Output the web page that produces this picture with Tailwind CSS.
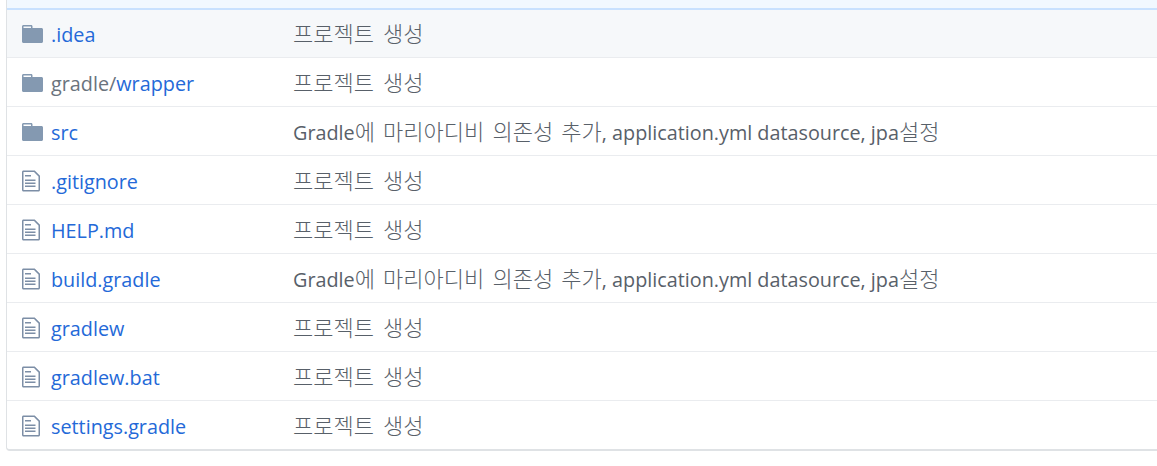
<!DOCTYPE html>
<html lang="ko">
<head>
    <meta charset="UTF-8">
    <title>Repository files</title>
    <script src="https://cdn.jsdelivr.net/npm/@tailwindcss/browser@4"></script>
</head>
<body class="bg-white overflow-hidden font-['Open_Sans','Noto_Sans_CJK_KR',sans-serif] text-[19.8px]">
    <div class="ml-[6px] h-[451px] border-l border-b-2 border-[#dfe2e5] rounded-bl-[4px] overflow-hidden">
        <div class="h-[10px] bg-[#f1f8ff] border-b-2 border-[#c8e1ff]"></div>

        <!-- folders -->
        <div class="h-[48px] pb-[1px] flex items-center bg-[#f6f8fa] border-b border-[#eaecef]">
            <div class="w-[44px] pl-[15px] pt-[1px] shrink-0">
                <svg class="w-[21px] h-[24px] fill-[#8499b1]" viewBox="0 0 14 16"><path fill-rule="evenodd" d="M13 4H7V3c0-.66-.31-1-1-1H1c-.55 0-1 .45-1 1v10c0 .55.45 1 1 1h12c.55 0 1-.45 1-1V5c0-.55-.45-1-1-1zM6 4H1V3h5v1z"/></svg>
            </div>
            <a class="w-[242px] shrink-0 pt-[3px] leading-[30px] text-[#2469d8]">.idea</a>
            <span class="pt-[1px] leading-[30px] text-[#586069]"><span class="text-[22px] [word-spacing:3px] font-['Noto_Sans_CJK_KR'] font-light">프로젝트 생성</span></span>
        </div>
        <div class="h-[49px] flex items-center border-b border-[#eaecef]">
            <div class="w-[44px] pl-[15px] pt-[1px] shrink-0">
                <svg class="w-[21px] h-[24px] fill-[#8499b1]" viewBox="0 0 14 16"><path fill-rule="evenodd" d="M13 4H7V3c0-.66-.31-1-1-1H1c-.55 0-1 .45-1 1v10c0 .55.45 1 1 1h12c.55 0 1-.45 1-1V5c0-.55-.45-1-1-1zM6 4H1V3h5v1z"/></svg>
            </div>
            <a class="w-[242px] shrink-0 pt-[3px] leading-[30px] text-[#2469d8]"><span class="text-[#6a737d]">gradle/</span>wrapper</a>
            <span class="pt-[1px] leading-[30px] text-[#586069]"><span class="text-[22px] [word-spacing:3px] font-['Noto_Sans_CJK_KR'] font-light">프로젝트 생성</span></span>
        </div>
        <div class="h-[49px] flex items-center border-b border-[#eaecef]">
            <div class="w-[44px] pl-[15px] pt-[1px] shrink-0">
                <svg class="w-[21px] h-[24px] fill-[#8499b1]" viewBox="0 0 14 16"><path fill-rule="evenodd" d="M13 4H7V3c0-.66-.31-1-1-1H1c-.55 0-1 .45-1 1v10c0 .55.45 1 1 1h12c.55 0 1-.45 1-1V5c0-.55-.45-1-1-1zM6 4H1V3h5v1z"/></svg>
            </div>
            <a class="w-[242px] shrink-0 pt-[3px] leading-[30px] text-[#2469d8]">src</a>
            <span class="pt-[1px] leading-[30px] text-[#586069]">Gradle<span class="text-[22px] [word-spacing:2px] font-['Noto_Sans_CJK_KR'] font-light">에 마리아디비 의존성 추가</span>, application.yml datasource, jpa<span class="text-[22px] font-['Noto_Sans_CJK_KR'] font-light">설정</span></span>
        </div>

        <!-- files -->
        <div class="h-[49px] flex items-center border-b border-[#eaecef]">
            <div class="w-[44px] pl-[15px] pt-[1px] shrink-0">
                <svg class="w-[18px] h-[24px] fill-[#7c8ea6]" viewBox="0 0 12 16"><path fill-rule="evenodd" d="M6 5H2V4h4v1zM2 8h7V7H2v1zm0 2h7V9H2v1zm0 2h7v-1H2v1zm10-7.5V14c0 .55-.45 1-1 1H1c-.55 0-1-.45-1-1V2c0-.55.45-1 1-1h7.5L12 4.5zM11 5L8 2H1v12h10V5z"/></svg>
            </div>
            <a class="w-[242px] shrink-0 pt-[3px] leading-[30px] text-[#2469d8]">.gitignore</a>
            <span class="pt-[1px] leading-[30px] text-[#586069]"><span class="text-[22px] [word-spacing:3px] font-['Noto_Sans_CJK_KR'] font-light">프로젝트 생성</span></span>
        </div>
        <div class="h-[49px] flex items-center border-b border-[#eaecef]">
            <div class="w-[44px] pl-[15px] pt-[1px] shrink-0">
                <svg class="w-[18px] h-[24px] fill-[#7c8ea6]" viewBox="0 0 12 16"><path fill-rule="evenodd" d="M6 5H2V4h4v1zM2 8h7V7H2v1zm0 2h7V9H2v1zm0 2h7v-1H2v1zm10-7.5V14c0 .55-.45 1-1 1H1c-.55 0-1-.45-1-1V2c0-.55.45-1 1-1h7.5L12 4.5zM11 5L8 2H1v12h10V5z"/></svg>
            </div>
            <a class="w-[242px] shrink-0 pt-[3px] leading-[30px] text-[#2469d8]">HELP.md</a>
            <span class="pt-[1px] leading-[30px] text-[#586069]"><span class="text-[22px] [word-spacing:3px] font-['Noto_Sans_CJK_KR'] font-light">프로젝트 생성</span></span>
        </div>
        <div class="h-[49px] flex items-center border-b border-[#eaecef]">
            <div class="w-[44px] pl-[15px] pt-[1px] shrink-0">
                <svg class="w-[18px] h-[24px] fill-[#7c8ea6]" viewBox="0 0 12 16"><path fill-rule="evenodd" d="M6 5H2V4h4v1zM2 8h7V7H2v1zm0 2h7V9H2v1zm0 2h7v-1H2v1zm10-7.5V14c0 .55-.45 1-1 1H1c-.55 0-1-.45-1-1V2c0-.55.45-1 1-1h7.5L12 4.5zM11 5L8 2H1v12h10V5z"/></svg>
            </div>
            <a class="w-[242px] shrink-0 pt-[3px] leading-[30px] text-[#2469d8]">build.gradle</a>
            <span class="pt-[1px] leading-[30px] text-[#586069]">Gradle<span class="text-[22px] [word-spacing:2px] font-['Noto_Sans_CJK_KR'] font-light">에 마리아디비 의존성 추가</span>, application.yml datasource, jpa<span class="text-[22px] font-['Noto_Sans_CJK_KR'] font-light">설정</span></span>
        </div>
        <div class="h-[49px] flex items-center border-b border-[#eaecef]">
            <div class="w-[44px] pl-[15px] pt-[1px] shrink-0">
                <svg class="w-[18px] h-[24px] fill-[#7c8ea6]" viewBox="0 0 12 16"><path fill-rule="evenodd" d="M6 5H2V4h4v1zM2 8h7V7H2v1zm0 2h7V9H2v1zm0 2h7v-1H2v1zm10-7.5V14c0 .55-.45 1-1 1H1c-.55 0-1-.45-1-1V2c0-.55.45-1 1-1h7.5L12 4.5zM11 5L8 2H1v12h10V5z"/></svg>
            </div>
            <a class="w-[242px] shrink-0 pt-[3px] leading-[30px] text-[#2469d8]">gradlew</a>
            <span class="pt-[1px] leading-[30px] text-[#586069]"><span class="text-[22px] [word-spacing:3px] font-['Noto_Sans_CJK_KR'] font-light">프로젝트 생성</span></span>
        </div>
        <div class="h-[49px] flex items-center border-b border-[#eaecef]">
            <div class="w-[44px] pl-[15px] pt-[1px] shrink-0">
                <svg class="w-[18px] h-[24px] fill-[#7c8ea6]" viewBox="0 0 12 16"><path fill-rule="evenodd" d="M6 5H2V4h4v1zM2 8h7V7H2v1zm0 2h7V9H2v1zm0 2h7v-1H2v1zm10-7.5V14c0 .55-.45 1-1 1H1c-.55 0-1-.45-1-1V2c0-.55.45-1 1-1h7.5L12 4.5zM11 5L8 2H1v12h10V5z"/></svg>
            </div>
            <a class="w-[242px] shrink-0 pt-[3px] leading-[30px] text-[#2469d8]">gradlew.bat</a>
            <span class="pt-[1px] leading-[30px] text-[#586069]"><span class="text-[22px] [word-spacing:3px] font-['Noto_Sans_CJK_KR'] font-light">프로젝트 생성</span></span>
        </div>
        <div class="h-[48px] flex items-center">
            <div class="w-[44px] pl-[15px] pt-[1px] shrink-0">
                <svg class="w-[18px] h-[24px] fill-[#7c8ea6]" viewBox="0 0 12 16"><path fill-rule="evenodd" d="M6 5H2V4h4v1zM2 8h7V7H2v1zm0 2h7V9H2v1zm0 2h7v-1H2v1zm10-7.5V14c0 .55-.45 1-1 1H1c-.55 0-1-.45-1-1V2c0-.55.45-1 1-1h7.5L12 4.5zM11 5L8 2H1v12h10V5z"/></svg>
            </div>
            <a class="w-[242px] shrink-0 pt-[3px] leading-[30px] text-[#2469d8]">settings.gradle</a>
            <span class="pt-[1px] leading-[30px] text-[#586069]"><span class="text-[22px] [word-spacing:3px] font-['Noto_Sans_CJK_KR'] font-light">프로젝트 생성</span></span>
        </div>
    </div>
</body>
</html>
